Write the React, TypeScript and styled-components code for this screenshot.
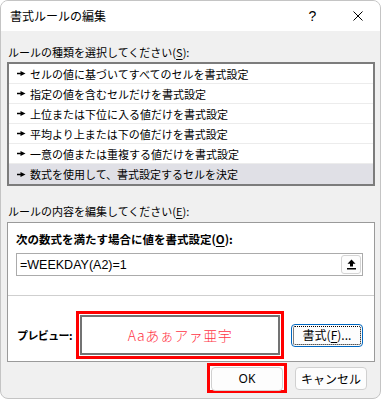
import { createGlobalStyle, styled } from 'styled-components';

const GlobalStyle = createGlobalStyle`
  html, body {
    margin: 0;
    padding: 0;
    background: #fff;
  }
  body {
    font-family: "Noto Sans CJK JP", "Noto Sans", sans-serif;
    color: #000;
  }
  * {
    box-sizing: border-box;
  }
`;

const Window = styled.div`
  width: 381px;
  height: 399px;
  border: 1px solid #c4c4c4;
  border-radius: 8px;
  overflow: hidden;
  display: flex;
  flex-direction: column;
  background: #f0f0f0;
`;

const TitleBar = styled.div`
  height: 30px;
  flex: 0 0 30px;
  background: #fff;
  display: flex;
  align-items: center;
  padding-left: 9px;
  font-size: 12px;
  line-height: 16px;
`;

const Title = styled.div`
  flex: 1;
`;

const CaptionButton = styled.div`
  width: 45px;
  height: 30px;
  display: flex;
  align-items: center;
  justify-content: center;
  font-family: "Liberation Sans", sans-serif;
  font-size: 14px;
`;

const Body = styled.div`
  display: flex;
  flex-direction: column;
  padding: 13px 5px 0 6px;
`;

const Label = styled.div<{ $gap?: number }>`
  font-size: 11px;
  line-height: 16px;
  height: 16px;
  padding-left: 1px;
  margin-top: ${(p) => p.$gap ?? 0}px;
  white-space: nowrap;
`;

const Key = styled.span`
  text-decoration: underline;
  text-underline-offset: 2px;
`;

const RuleList = styled.div`
  margin-top: 2px;
  border: 2px solid #7c7c7c;
  background: #fff;
  display: flex;
  flex-direction: column;
`;

const RuleRow = styled.div<{ $selected?: boolean }>`
  height: 20px;
  display: flex;
  align-items: center;
  gap: 4px;
  padding-left: 8px;
  font-size: 11px;
  line-height: 16px;
  white-space: nowrap;
  background: ${(p) => (p.$selected ? '#e0e0e6' : '#fff')};
  border-bottom: 1px solid ${(p) => (p.$selected ? '#e0e0e6' : '#ececec')};
  &:last-child {
    border-bottom: none;
  }
`;

const Panel = styled.div`
  margin-top: 3px;
  height: 140px;
  border: 1px solid #9a9a9a;
  background: #fff;
  display: flex;
  flex-direction: column;
`;

const FormulaSection = styled.div`
  padding: 8px 11px 19px 8px;
  display: flex;
  flex-direction: column;
`;

const BoldLabel = styled.div`
  font-size: 11.5px;
  font-weight: bold;
  line-height: 16px;
  height: 16px;
  white-space: nowrap;
`;

const FormulaInput = styled.div`
  margin-top: 6px;
  height: 23px;
  border: 1px solid #ababab;
  display: flex;
  align-items: center;
  padding-left: 3px;
  padding-right: 1px;
`;

const FormulaText = styled.div`
  flex: 1;
  font-family: "Liberation Sans", sans-serif;
  font-size: 12.5px;
  line-height: 16px;
`;

const RefButton = styled.div`
  width: 20px;
  height: 19px;
  border: 1px solid #d4d4d4;
  border-radius: 3px;
  background: #fdfdfd;
  display: flex;
  align-items: center;
  justify-content: center;
`;

const Separator = styled.div`
  height: 1px;
  background: #cfcfcf;
`;

const PreviewSection = styled.div`
  display: flex;
  align-items: center;
  padding: 15px 0 2px 9px;
`;

const PreviewLabel = styled.div`
  flex: 0 0 59px;
  font-size: 11px;
  font-weight: bold;
  line-height: 16px;
  letter-spacing: -0.6px;
  white-space: nowrap;
`;

const RedFrame = styled.div<{ $w: number; $h: number }>`
  width: ${(p) => p.$w}px;
  height: ${(p) => p.$h}px;
  border: 3px solid #ff0000;
  padding: 1px;
  background: #fff;
  display: flex;
`;

const PreviewBox = styled.div`
  flex: 1;
  border: 2px solid #737373;
  display: flex;
  align-items: center;
  justify-content: center;
  color: #ff3546;
  font-size: 14px;
  font-weight: 300;
  letter-spacing: 0.5px;
  line-height: 18px;
`;

const Button = styled.div<{ $focused?: boolean; $top?: number }>`
  width: 72px;
  height: 23px;
  margin-top: ${(p) => p.$top ?? 0}px;
  border: 1px solid ${(p) => (p.$focused ? '#0067c0' : '#d0d0d0')};
  border-radius: 4px;
  background: #fdfdfd;
  display: flex;
  align-items: center;
  justify-content: center;
  font-size: 12px;
  line-height: 16px;
  white-space: nowrap;
  outline: ${(p) => (p.$focused ? '1px dotted #000' : 'none')};
  outline-offset: -3px;
`;

const FormatButton = styled(Button)`
  margin-left: 7px;
`;

const OkButton = styled(Button)`
  height: 24px;
  font-family: "Noto Sans", sans-serif;
`;

const ButtonRow = styled.div`
  display: flex;
  justify-content: flex-end;
  align-items: flex-start;
  gap: 8px;
  padding: 1px 8px 0 0;
`;

const RowArrow = () => (
  <svg width="9" height="7" viewBox="0 0 9 7">
    <rect x="0" y="2.75" width="4" height="1.5" fill="#000" />
    <polygon points="3.5,1 8.5,3.5 3.5,6" fill="#000" />
  </svg>
);

const UpIcon = () => (
  <svg width="9" height="11" viewBox="0 0 9 11">
    <path d="M4.5 0.5 L8.5 4.8 H6 V7.5 H3 V4.8 H0.5 Z" fill="#000" />
    <rect x="0" y="9" width="9" height="1.5" fill="#000" />
  </svg>
);

const CloseIcon = () => (
  <svg width="10" height="10" viewBox="0 0 10 10">
    <path d="M0.5 0.5 L9.5 9.5 M9.5 0.5 L0.5 9.5" stroke="#000" strokeWidth="1" />
  </svg>
);

const rules = [
  'セルの値に基づいてすべてのセルを書式設定',
  '指定の値を含むセルだけを書式設定',
  '上位または下位に入る値だけを書式設定',
  '平均より上または下の値だけを書式設定',
  '一意の値または重複する値だけを書式設定',
  '数式を使用して、書式設定するセルを決定',
];

const App = () => {
  return (
    <>
      <GlobalStyle />
      <Window>
        <TitleBar>
          <Title>書式ルールの編集</Title>
          <CaptionButton>?</CaptionButton>
          <CaptionButton>
            <CloseIcon />
          </CaptionButton>
        </TitleBar>
        <Body>
          <Label>
            ルールの種類を選択してください(<Key>S</Key>):
          </Label>
          <RuleList>
            {rules.map((r, i) => (
              <RuleRow key={r} $selected={i === rules.length - 1}>
                <RowArrow />
                {r}
              </RuleRow>
            ))}
          </RuleList>
          <Label $gap={17}>
            ルールの内容を編集してください(<Key>E</Key>):
          </Label>
          <Panel>
            <FormulaSection>
              <BoldLabel>
                次の数式を満たす場合に値を書式設定(<Key>O</Key>):
              </BoldLabel>
              <FormulaInput>
                <FormulaText>=WEEKDAY(A2)=1</FormulaText>
                <RefButton>
                  <UpIcon />
                </RefButton>
              </FormulaInput>
            </FormulaSection>
            <Separator />
            <PreviewSection>
              <PreviewLabel>プレビュー:</PreviewLabel>
              <RedFrame $w={208} $h={48}>
                <PreviewBox>Aaあぁアァ亜宇</PreviewBox>
              </RedFrame>
              <FormatButton $focused>
                書式(<Key>F</Key>)...
              </FormatButton>
            </PreviewSection>
          </Panel>
          <ButtonRow>
            <RedFrame $w={80} $h={30}>
              <OkButton>OK</OkButton>
            </RedFrame>
            <Button $top={4}>キャンセル</Button>
          </ButtonRow>
        </Body>
      </Window>
    </>
  );
};

export default App;
